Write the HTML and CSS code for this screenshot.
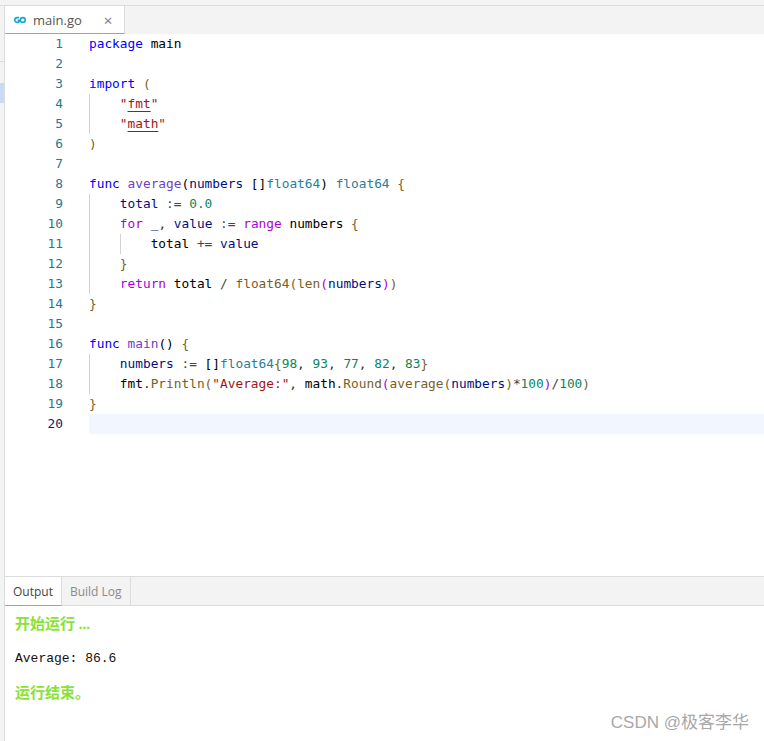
FILE: index.html
```html
<!DOCTYPE html>
<html lang="en">
<head>
  <meta charset="UTF-8" />
  <title>main.go</title>
  <link rel="stylesheet" href="styles.css">
</head>
<body>

  <div class="top-strip"></div>

  <div class="workbench">
    <div class="side">
      <div class="side-head"></div>
      <div class="side-item"></div>
    </div>

    <div class="main">
      <div class="tabs">
        <div class="tab">
          <svg class="go-icon" width="12" height="8" viewBox="0 0 12 8" fill="none" stroke="#19a7ce" stroke-width="1.6">
            <path d="M5.2 1.6H3.2a2.4 2.4 0 0 0 0 4.8h.6a1.8 1.8 0 0 0 1.6-2H3.6"/>
            <circle cx="8.8" cy="4" r="2.4"/>
          </svg>
          <span class="tab-name">main.go</span>
          <span class="tab-close">×</span>
        </div>
      </div>

      <div class="editor">
        <div class="line"><span class="num">1</span><code><span class="kw">package</span> <span class="plain">main</span></code></div>
        <div class="line"><span class="num">2</span><code></code></div>
        <div class="line"><span class="num">3</span><code><span class="kw">import</span> <span class="br">(</span></code></div>
        <div class="line"><span class="num">4</span><code class="g1"><span class="str">    "<u>fmt</u>"</span></code></div>
        <div class="line"><span class="num">5</span><code class="g1"><span class="str">    "<u>math</u>"</span></code></div>
        <div class="line"><span class="num">6</span><code><span class="br">)</span></code></div>
        <div class="line"><span class="num">7</span><code></code></div>
        <div class="line"><span class="num">8</span><code><span class="kw">func</span> <span class="def">average</span><span class="plain">(<span class="var">numbers</span> []</span><span class="type">float64</span><span class="plain">)</span> <span class="type">float64</span> <span class="br">{</span></code></div>
        <div class="line"><span class="num">9</span><code class="g1"><span class="var">    total</span> <span class="op">:=</span> <span class="nr">0.0</span></code></div>
        <div class="line"><span class="num">10</span><code class="g1">    <span class="ctl">for</span> <span class="var">_</span>, <span class="var">value</span> <span class="op">:=</span> <span class="ctl">range</span> <span class="plain">numbers</span> <span class="br">{</span></code></div>
        <div class="line"><span class="num">11</span><code class="g1 g2"><span class="plain">        total</span> <span class="op">+=</span> <span class="var">value</span></code></div>
        <div class="line"><span class="num">12</span><code class="g1">    <span class="br">}</span></code></div>
        <div class="line"><span class="num">13</span><code class="g1">    <span class="ctl">return</span> <span class="plain">total</span> <span class="op">/</span> <span class="fn">float64</span><span class="br">(</span><span class="fn">len</span><span class="pur">(</span><span class="var">numbers</span><span class="pur">)</span><span class="br">)</span></code></div>
        <div class="line"><span class="num">14</span><code><span class="br">}</span></code></div>
        <div class="line"><span class="num">15</span><code></code></div>
        <div class="line"><span class="num">16</span><code><span class="kw">func</span> <span class="def">main</span><span class="plain">()</span> <span class="br">{</span></code></div>
        <div class="line"><span class="num">17</span><code class="g1"><span class="var">    numbers</span> <span class="op">:=</span> <span class="plain">[]</span><span class="type">float64</span><span class="br">{</span><span class="nr">98</span>, <span class="nr">93</span>, <span class="nr">77</span>, <span class="nr">82</span>, <span class="nr">83</span><span class="br">}</span></code></div>
        <div class="line"><span class="num">18</span><code class="g1"><span class="plain">    fmt</span>.<span class="fn">Println</span><span class="br">(</span><span class="str">"Average:"</span>, <span class="plain">math</span>.<span class="fn">Round</span><span class="pur">(</span><span class="fn">average</span><span class="br">(</span><span class="var">numbers</span><span class="br">)</span><span class="op">*</span><span class="nr">100</span><span class="pur">)</span><span class="op">/</span><span class="nr">100</span><span class="br">)</span></code></div>
        <div class="line"><span class="num">19</span><code><span class="br">}</span></code></div>
        <div class="line line-active"><span class="num num-active">20</span><code></code></div>
      </div>

      <div class="panel">
        <div class="panel-tabs">
          <div class="panel-tab panel-tab-on">Output</div>
          <div class="panel-tab">Build Log</div>
        </div>
        <div class="output">
          <p class="out-msg">开始运行 ...</p>
          <p class="out-text">Average: 86.6</p>
          <p class="out-msg">运行结束。</p>
        </div>
      </div>
    </div>
  </div>

  <div class="watermark">CSDN @极客李华</div>

</body>
</html>
```

FILE: styles.css
```css
* {
  box-sizing: border-box;
}

html, body {
  height: 100%;
}

body {
  margin: 0;
  display: flex;
  flex-direction: column;
  background: #fff;
  overflow: hidden;
  font-family: "Open Sans", "Noto Sans", sans-serif;
}

.top-strip {
  height: 6px;
  background: #f3f3f3;
  border-bottom: 1px solid #dcdcdc;
}

.workbench {
  flex: 1;
  display: flex;
  min-height: 0;
}

.side {
  width: 5px;
  background: #f3f3f3;
  border-right: 1px solid #dcdcdc;
}

.side-head {
  height: 56px;
  border-bottom: 1px solid #dcdcdc;
}

.side-item {
  height: 20px;
  margin-top: 21px;
  background: #c9daf2;
}

.main {
  flex: 1;
  min-width: 0;
  display: flex;
  flex-direction: column;
}

/* tab bar */
.tabs {
  height: 28px;
  display: flex;
  background: #f3f3f3;
}

.tab {
  width: 120px;
  display: flex;
  align-items: center;
  padding-left: 9px;
  background: #fff;
  border-right: 1px solid #dcdcdc;
  border-bottom: 1px solid #7aa5f5;
  font-size: 13px;
  color: #555;
}

.go-icon {
  flex: none;
}

.tab-name {
  margin-left: 7px;
}

.tab-close {
  margin-left: 22px;
  font-size: 15px;
  color: #777;
}

/* editor */
.editor {
  flex: 1;
  padding-top: 0;
  min-height: 0;
}

.line {
  height: 20px;
  display: flex;
  font-family: "DejaVu Sans Mono", monospace;
  font-size: 12.8px;
  line-height: 20px;
  color: #333;
}

.num {
  width: 58px;
  flex: none;
  text-align: right;
  color: #237893;
}

.num-active {
  color: #0b216f;
}

code {
  flex: 1;
  margin-left: 26px;
  font: inherit;
  white-space: pre;
}

.line-active code {
  background: #f2f6fe;
}

.g1 {
  background: linear-gradient(#d3d3d3, #d3d3d3) 0 0 / 1px 100% no-repeat;
}

.g1.g2 {
  background:
    linear-gradient(#d3d3d3, #d3d3d3) 0 0 / 1px 100% no-repeat,
    linear-gradient(#d3d3d3, #d3d3d3) 31px 0 / 1px 100% no-repeat;
}

.kw { color: #0000ff; }
.ctl { color: #af00db; }
.type { color: #267f99; }
.fn { color: #795e26; }
.def { color: #6f42c1; }
.var { color: #001080; }
.nr { color: #098658; }
.str { color: #a31515; }
.plain { color: #000; }
.br { color: #795e26; }
.pur { color: #af00db; }
.op { color: #444; }

.str u {
  text-decoration: underline;
  text-decoration-color: #b01010;
  text-underline-offset: 3px;
}

/* output panel */
.panel {
  height: 165px;
  flex: none;
  border-top: 1px solid #dcdcdc;
}

.panel-tabs {
  height: 29px;
  display: flex;
  background: #f3f3f3;
  border-bottom: 1px solid #dcdcdc;
}

.panel-tab {
  padding: 0 8px;
  line-height: 29px;
  font-size: 12px;
  color: #8a8a8a;
  border-right: 1px solid #dcdcdc;
}

.panel-tab-on {
  background: #fff;
  color: #444;
  margin-bottom: -1px;
  border-bottom: 1px solid #7aa5f5;
}

.output {
  padding: 8px 0 0 10px;
}

.output p {
  margin: 0;
}

.out-msg {
  font-family: "Liberation Serif", "Noto Sans CJK SC", serif;
  font-size: 15px;
  font-weight: bold;
  line-height: 20px;
  color: #8ae234;
}

.out-text {
  padding: 15px 0 14px;
  font-family: "Liberation Mono", monospace;
  font-size: 13px;
  line-height: 20px;
  color: #111;
}

.watermark {
  position: absolute;
  right: 15px;
  bottom: 8px;
  font-family: "Liberation Sans", "Noto Sans CJK SC", sans-serif;
  font-size: 17px;
  color: #a8a8a8;
}
```
